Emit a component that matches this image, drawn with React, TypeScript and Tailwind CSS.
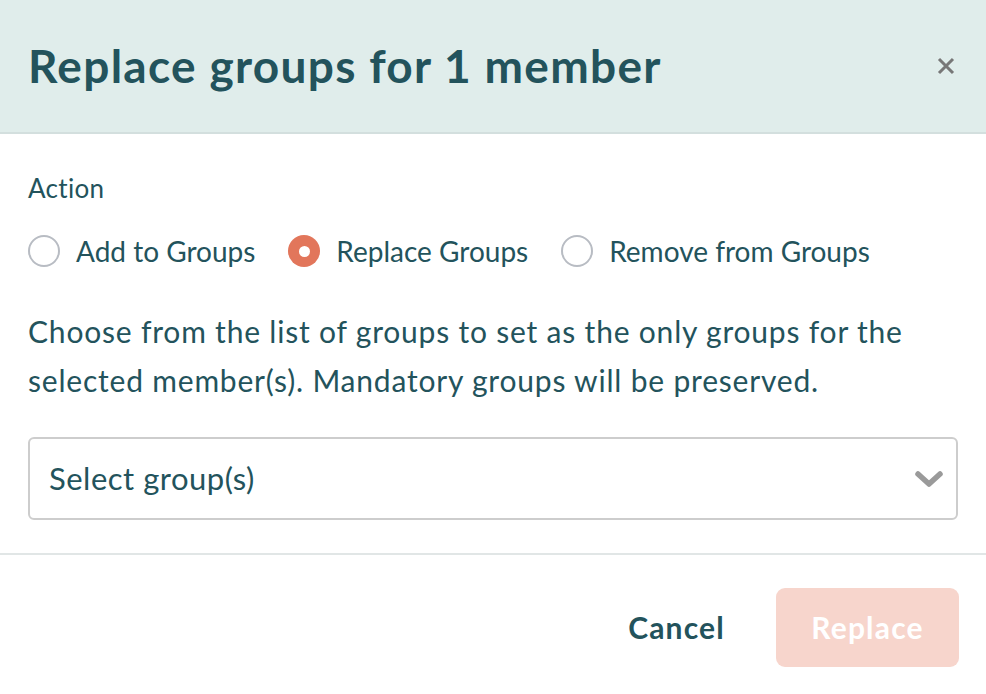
import React from "react";

const Radio = ({ checked, label }: { checked?: boolean; label: string }) => (
  <label className="flex items-center gap-[16px]">
    {checked ? (
      <span className="w-[32px] h-[32px] rounded-full bg-[#e2765b] flex items-center justify-center">
        <span className="w-[11px] h-[11px] rounded-full bg-white" />
      </span>
    ) : (
      <span className="w-[32px] h-[32px] rounded-full border-2 border-[#b8bcc3] bg-white" />
    )}
    <span>{label}</span>
  </label>
);

export default function App() {
  return (
    <div
      className="w-[986px] h-[694px] bg-white text-[#23535c] overflow-hidden"
      style={{ fontFamily: "Lato, 'Open Sans', sans-serif" }}
    >
      <div className="h-[134px] bg-[#e0edeb] border-b-2 border-[#d3dfde] flex items-center justify-between pl-[28px] pr-[28px]">
        <h1 className="text-[46px] font-bold tracking-[1.3px] leading-none">Replace groups for 1 member</h1>
        <button className="text-[#777] w-[24px] h-[24px] flex items-center justify-center">
          <svg width="20" height="20" viewBox="0 0 20 20" fill="none" stroke="currentColor" strokeWidth="3">
            <path d="M3 3 L17 17 M17 3 L3 17" />
          </svg>
        </button>
      </div>
      <div className="px-[28px] pt-[39px] pb-[33px] border-b-2 border-[#e1e6e6]">
        <div className="text-[26px] leading-[30px] tracking-[0.3px]">Action</div>
        <div className="flex items-center gap-[33px] mt-[32px] text-[28px] leading-[32px]">
          <Radio label="Add to Groups" />
          <Radio checked label="Replace Groups" />
          <Radio label="Remove from Groups" />
        </div>
        <p className="text-[30px] leading-[49px] mt-[40px] tracking-[0.8px]">
          Choose from the list of groups to set as the only groups for the selected member(s). Mandatory groups will be preserved.
        </p>
        <div className="mt-[32px] h-[83px] border-2 border-[#cdcdcd] rounded-[6px] flex items-center justify-between pl-[19px] pr-[12px]">
          <span className="text-[31px] tracking-[0.5px]">Select group(s)</span>
          <svg width="30" height="20" viewBox="0 0 30 20" fill="none" stroke="#9a9a9a" strokeWidth="5.5" strokeLinecap="round" strokeLinejoin="round">
            <path d="M4 5 L15 15 L26 5" />
          </svg>
        </div>
      </div>
      <div className="flex items-center justify-end gap-[51px] pr-[27px] pt-[33px]">
        <button className="text-[30px] font-bold tracking-[1.2px]">Cancel</button>
        <button className="w-[183px] h-[79px] rounded-[9px] bg-[#f7d5cc] text-white text-[30px] font-bold tracking-[1.2px]">Replace</button>
      </div>
    </div>
  );
}
